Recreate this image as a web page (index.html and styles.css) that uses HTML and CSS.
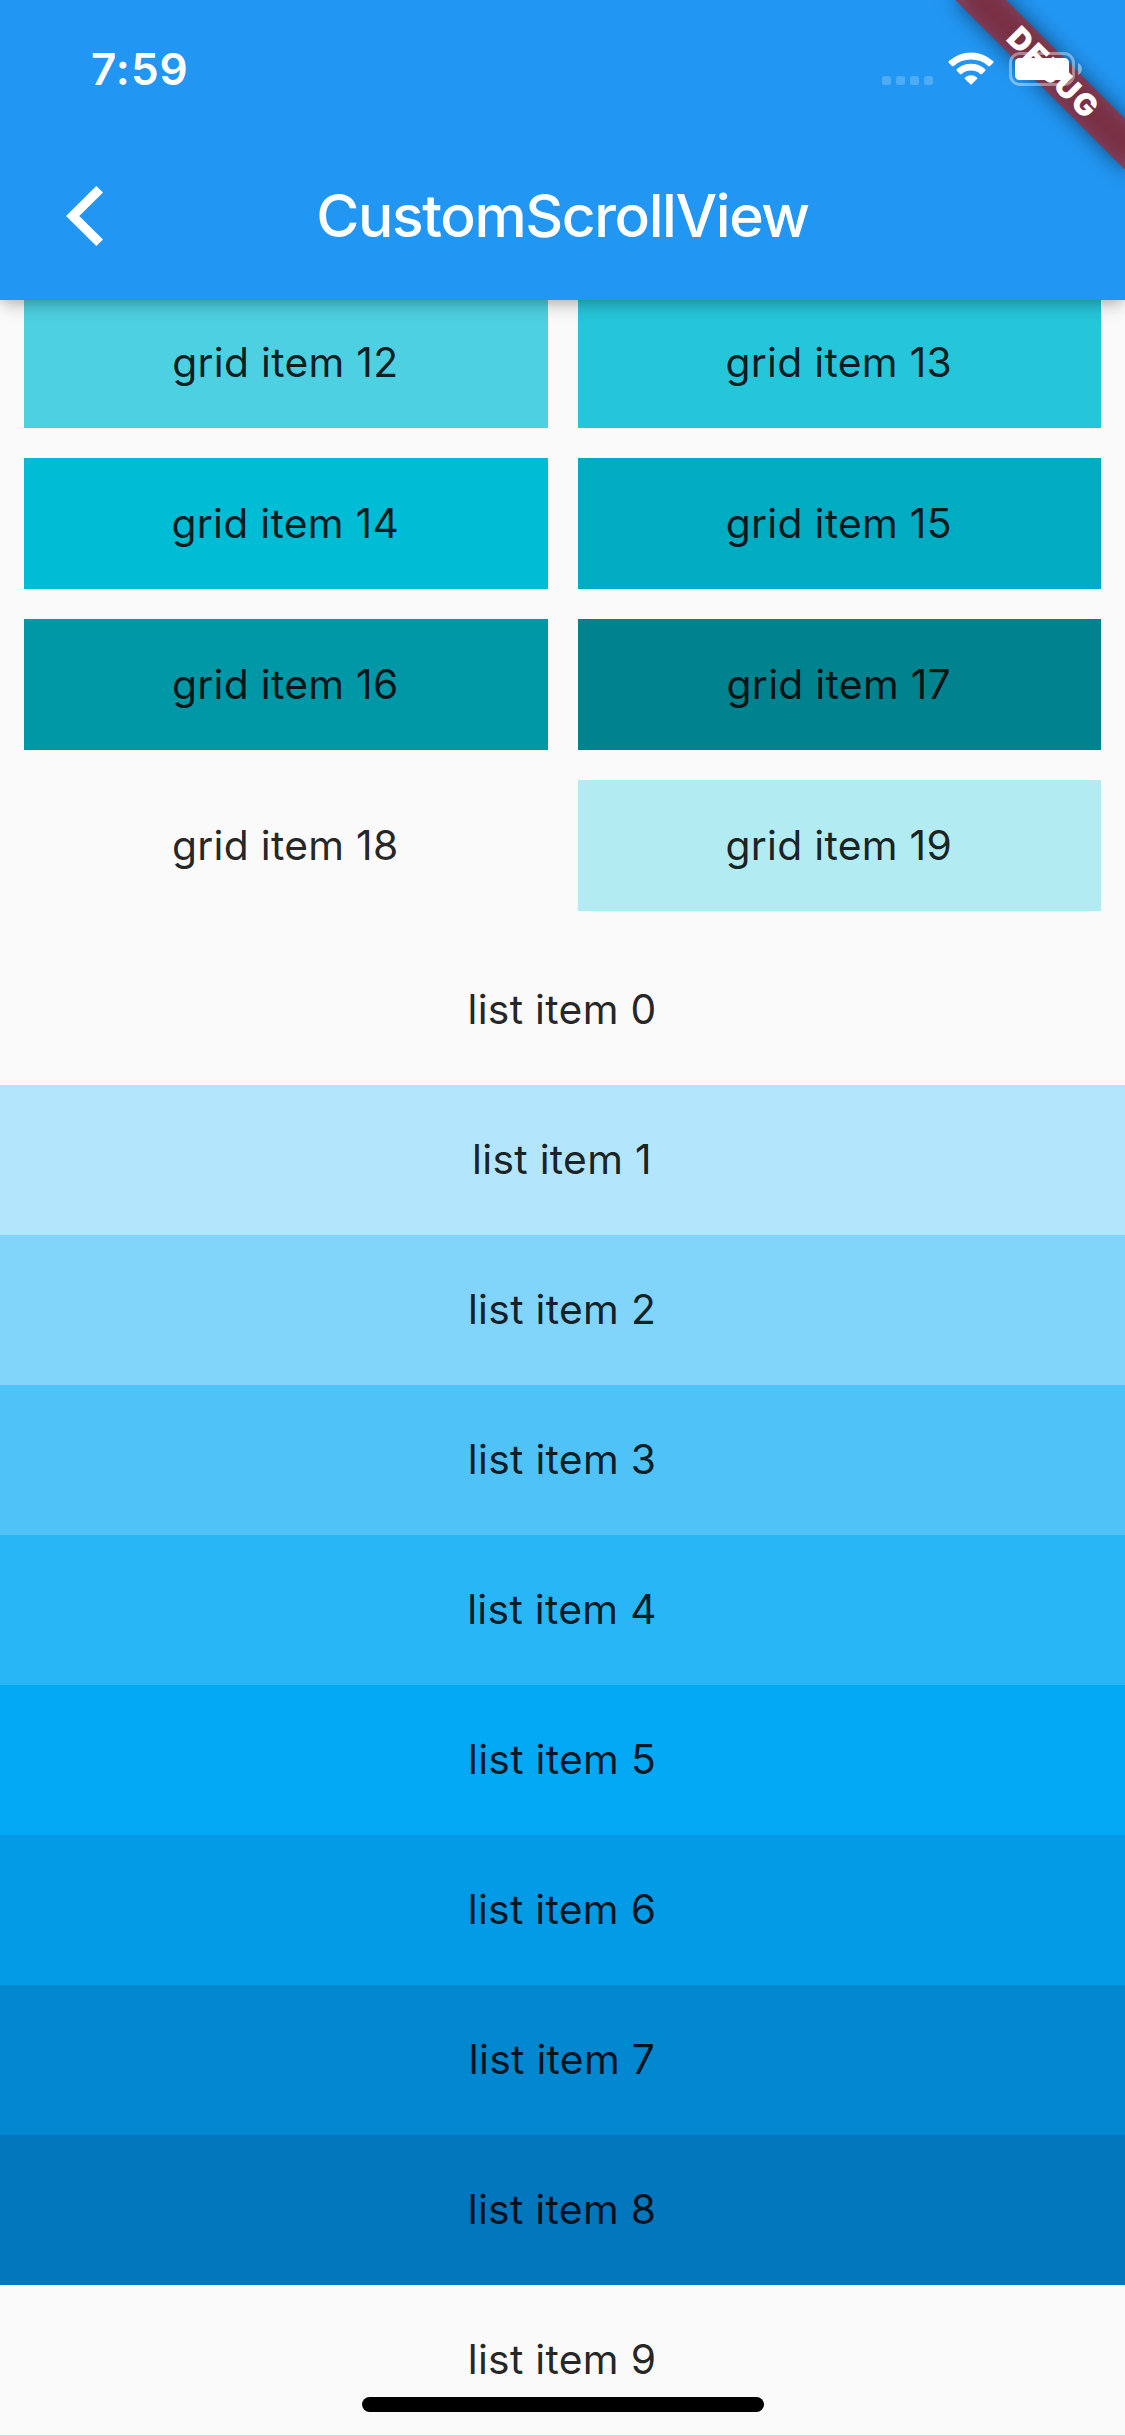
FILE: index.html
```html
<!DOCTYPE html>
<html lang="en">
<head>
<meta charset="utf-8">
<title>CustomScrollView</title>
<link rel="stylesheet" href="styles.css">
</head>
<body>
<div class="screen">
  <header class="app-bar">
    <div class="debug-banner"><span>DEBUG</span></div>
    <div class="status-bar">
      <span class="time">7:59</span>
      <svg class="status-icons" width="202" height="36" viewBox="0 0 202 36" fill="#fff">
        <g opacity=".2">
          <rect x="0" y="25" width="9" height="9" rx="2.5"/>
          <rect x="14" y="25" width="9" height="9" rx="2.5"/>
          <rect x="28" y="25" width="9" height="9" rx="2.5"/>
          <rect x="42" y="25" width="9" height="9" rx="2.5"/>
        </g>
        <path d="M66.9 10.1Q66 11 66.9 11.9L70 14.9Q70.9 15.8 71.8 14.9A26 26 0 0 1 106.2 14.9Q107.1 15.8 108 14.9L111.1 11.9Q112 11 111.1 10.1A32.5 32.5 0 0 0 66.9 10.1Z"/>
        <path d="M74.9 18.1Q74 19 74.9 19.9L78 22.9Q78.9 23.7 79.8 22.9A14.5 14.5 0 0 1 98.2 22.9Q99.1 23.7 100 22.9L103.1 19.9Q104 19 103.1 18.1A21.5 21.5 0 0 0 74.9 18.1Z"/>
        <path d="M83 26.5Q82.2 27.3 83 28.1L88.3 33.3Q89 34 89.7 33.3L95 28.1Q95.8 27.3 95 26.5A9.5 9.5 0 0 0 83 26.5Z"/>
        <rect x="128.5" y="2.5" width="63" height="31" rx="9.5" fill="none" stroke="#fff" stroke-width="3" opacity=".4"/>
        <rect x="133" y="7" width="54" height="22" rx="4.5"/>
        <path d="M196 12a6.6 6.6 0 0 1 0 12z" opacity=".45"/>
      </svg>
    </div>
    <div class="toolbar">
      <svg class="back" width="38" height="60" viewBox="0 0 38 60"><path d="M30.3 0L37 6.6 13.3 30 37 53.4 30.3 60 0 30z" fill="#fff"/></svg>
      <h1 class="title">CustomScrollView</h1>
    </div>
  </header>
  <main class="scroll-view">
    <div class="grid">
      <div class="cell cyan-300">grid item 12</div>
      <div class="cell cyan-400">grid item 13</div>
      <div class="cell cyan-500">grid item 14</div>
      <div class="cell cyan-600">grid item 15</div>
      <div class="cell cyan-700">grid item 16</div>
      <div class="cell cyan-800">grid item 17</div>
      <div class="cell">grid item 18</div>
      <div class="cell cyan-100">grid item 19</div>
    </div>
    <div class="list">
      <div class="row">list item 0</div>
      <div class="row blue-100">list item 1</div>
      <div class="row blue-200">list item 2</div>
      <div class="row blue-300">list item 3</div>
      <div class="row blue-400">list item 4</div>
      <div class="row blue-500">list item 5</div>
      <div class="row blue-600">list item 6</div>
      <div class="row blue-700">list item 7</div>
      <div class="row blue-800">list item 8</div>
      <div class="row">list item 9</div>
      <div class="row blue-100"></div>
    </div>
  </main>
  <div class="home-indicator"></div>
</div>
</body>
</html>
```
FILE: styles.css
```css
* { box-sizing: border-box; }
body { margin: 0; }
.screen {
  position: relative;
  display: flex;
  flex-direction: column;
  width: 1125px;
  height: 2436px;
  overflow: hidden;
  background: #fafafa;
  color: rgba(0, 0, 0, .87);
  font-family: Inter, "Liberation Sans", sans-serif;
  font-size: 40.8px;
}

/* App bar */
.app-bar {
  position: relative;
  z-index: 1;
  flex: none;
  height: 300px;
  background: #2196f3;
  color: #fff;
  box-shadow: 0 9px 15px -3px rgba(0, 0, 0, .22), 0 2px 8px rgba(0, 0, 0, .08);
}
.status-bar {
  position: relative;
  display: flex;
  justify-content: space-between;
  align-items: flex-start;
  height: 132px;
  padding: 51px 41px 0 91px;
}
.time {
  font-size: 44px;
  font-weight: 600;
  line-height: 36px;
  letter-spacing: 1px;
}
.toolbar {
  display: grid;
  grid-template-columns: 168px 1fr 168px;
  align-items: center;
  height: 168px;
}
.back { margin-left: 66px; }
.title {
  margin: 0;
  font-size: 58.8px;
  font-weight: 500;
  line-height: 72px;
  letter-spacing: -1.4px;
  text-align: center;
  white-space: nowrap;
}

/* Corner ribbon */
.debug-banner {
  position: absolute;
  top: 84px;
  left: 1005px;
  width: 240px;
  height: 36px;
  transform: rotate(45deg);
  transform-origin: 120px -84px;
  font-size: 30.6px;
  font-weight: 900;
  line-height: 36px;
  letter-spacing: 1.8px;
  text-indent: 1.8px;
  text-align: center;
}
.debug-banner::before,
.debug-banner::after {
  content: "";
  position: absolute;
  inset: 0;
}
.debug-banner::before {
  background: rgba(0, 0, 0, .5);
  filter: blur(10.9px);
}
.debug-banner::after { background: rgba(183, 28, 28, .627); }
.debug-banner span { position: relative; z-index: 1; }

/* Scrolling content */
.scroll-view {
  flex: 1;
  min-height: 0;
  margin-top: -2.5px;
}
.grid {
  display: grid;
  grid-template-columns: 1fr 1fr;
  grid-auto-rows: 130.875px;
  gap: 30px;
  padding: 0 24px 24px;
}
.cell, .row {
  display: flex;
  align-items: center;
  justify-content: center;
  padding: 0 1px 2px 0;
  letter-spacing: .3px;
}
.row { height: 150px; }

.cyan-100 { background: #b2ebf2; }
.cyan-300 { background: #4dd0e1; }
.cyan-400 { background: #26c6da; }
.cyan-500 { background: #00bcd4; }
.cyan-600 { background: #00acc1; }
.cyan-700 { background: #0097a7; }
.cyan-800 { background: #00838f; }

.blue-100 { background: #b3e5fc; }
.blue-200 { background: #81d4fa; }
.blue-300 { background: #4fc3f7; }
.blue-400 { background: #29b6f6; }
.blue-500 { background: #03a9f4; }
.blue-600 { background: #039be5; }
.blue-700 { background: #0288d1; }
.blue-800 { background: #0277bd; }

.home-indicator {
  position: absolute;
  left: 362px;
  bottom: 24px;
  width: 402px;
  height: 15px;
  border-radius: 7.5px;
  background: #000;
}
```
